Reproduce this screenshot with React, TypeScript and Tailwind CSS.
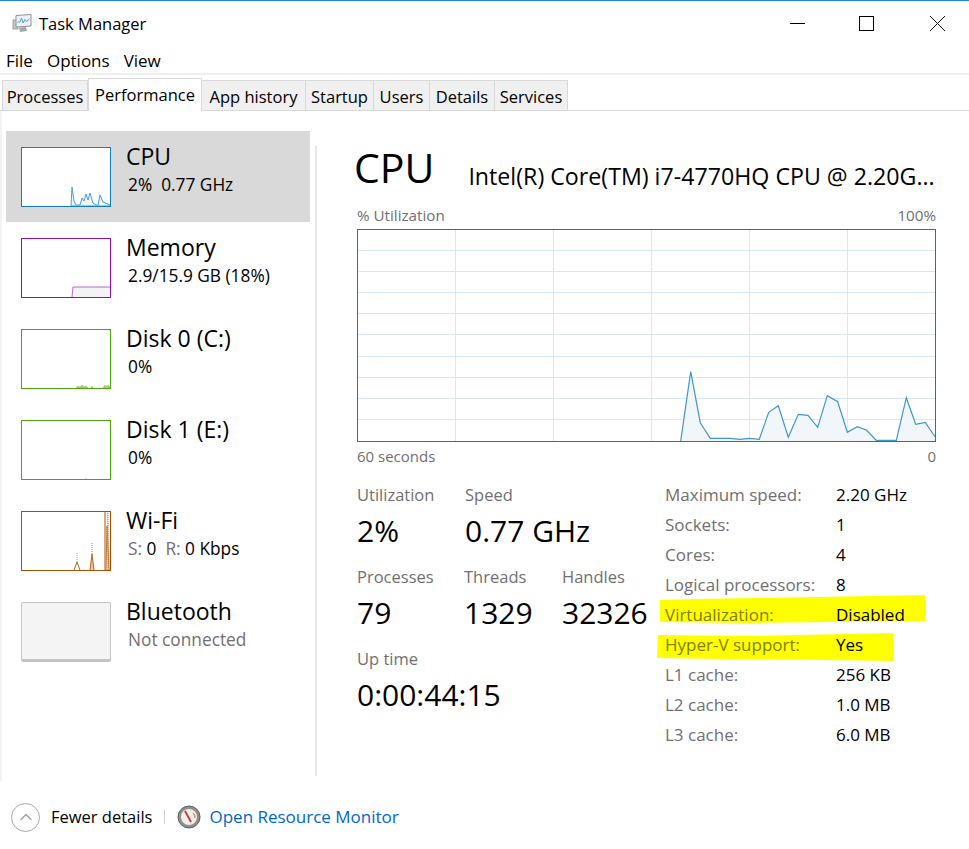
import { ChevronUp } from "lucide-react";

const tabs = [
  { label: "Processes", width: "w-[86px]" },
  { label: "Performance", width: "w-[114px]", active: true },
  { label: "App history", width: "w-[104px]" },
  { label: "Startup", width: "w-[68px]" },
  { label: "Users", width: "w-[56px]" },
  { label: "Details", width: "w-[65px]" },
  { label: "Services", width: "w-[73px]" },
];

const cpuPoints =
  "323.7,212 333.7,142.7 343.3,193.7 353.3,209.3 373,209.3 383,210.3 392.3,209.3 402.3,210.3 411.7,183.3 421.3,176.7 431.3,208.3 441.3,185.3 451,186.3 460.7,198.3 470.3,166.7 480.7,172.7 490.3,203.3 500.3,197.7 509.7,201.3 519.3,211.3 539.3,211.3 549.3,168.7 558.7,195.3 568.3,193.3 578,207.7";

function CpuThumb() {
  return (
    <svg viewBox="0 0 88 58" className="h-full w-full">
      <path
        d="M49 58 L50 39 L52 53 L54 57 L58 57 L60 50 L62 53 L64 46 L66 52 L68 45 L71 55 L74 57 L76 57 L78 47 L81 54 L88 57 V58 Z"
        fill="#f1f6fb"
        stroke="#4b9fd0"
        strokeWidth="1"
      />
    </svg>
  );
}

function MemoryThumb() {
  return (
    <svg viewBox="0 0 88 58" className="h-full w-full">
      <path d="M50 58 L51 48 H88 V58 Z" fill="#f4f2f4" />
      <path d="M50 58 L51 48 H88" fill="none" stroke="#b36cc9" strokeWidth="1" />
    </svg>
  );
}

function DiskThumb({ busy }: { busy: boolean }) {
  return (
    <svg viewBox="0 0 88 58" className="h-full w-full">
      {busy ? (
        <path
          d="M54 58 L56 56 L58 57 L60 55 L62 57 L64 56 L66 58 Z M69 58 L70 56 L71 58 Z M81 58 L83 55 L85 57 L86 55 L88 57 V58 Z"
          fill="#a8cf86"
          stroke="#8fc365"
          strokeWidth="0.6"
        />
      ) : (
        <path d="M63 58 L64 57 L65 58 Z" fill="#a8cf86" />
      )}
    </svg>
  );
}

function WifiThumb() {
  return (
    <svg viewBox="0 0 88 58" className="h-full w-full">
      <path d="M52 58 L55 50 L58 58" fill="none" stroke="#b5651d" strokeWidth="1" />
      <path d="M55 50 V40" stroke="#dd9a78" strokeWidth="1" strokeDasharray="1 1" />
      <path d="M68 58 L70 42 L72 58" fill="#e7c6ab" stroke="#b5651d" strokeWidth="1" />
      <path d="M70 42 V31" stroke="#d9713f" strokeWidth="1" strokeDasharray="1 1" />
      <path d="M83 58 V0" stroke="#a85404" strokeWidth="1" />
      <path d="M84 58 L85 0 L86 0 L88 58 Z" fill="#edd8c4" />
      <path d="M86 58 V0" stroke="#d9713f" strokeWidth="1" strokeDasharray="1 1" />
      <path d="M84 58 L85 14 L87 58" fill="none" stroke="#c47a3c" strokeWidth="1" />
    </svg>
  );
}

const sideItems = [
  {
    title: "CPU",
    box: "border-[#117dbb]",
    thumb: <CpuThumb />,
    sub: <span>2%&nbsp; 0.77 GHz</span>,
    selected: true,
  },
  {
    title: "Memory",
    box: "border-[#8b12ae]",
    thumb: <MemoryThumb />,
    sub: <span>2.9/15.9 GB (18%)</span>,
  },
  {
    title: "Disk 0 (C:)",
    box: "border-[#4da60c]",
    thumb: <DiskThumb busy />,
    sub: <span>0%</span>,
  },
  {
    title: "Disk 1 (E:)",
    box: "border-[#4da60c]",
    thumb: <DiskThumb busy={false} />,
    sub: <span>0%</span>,
  },
  {
    title: "Wi-Fi",
    box: "border-[#a74f01]",
    thumb: <WifiThumb />,
    sub: (
      <span>
        <span className="text-[#707070]">S:</span> 0&nbsp; <span className="text-[#707070]">R:</span> 0 Kbps
      </span>
    ),
  },
  {
    title: "Bluetooth",
    box: "border-[#c4c4c4] bg-[#f4f4f4] rounded-[2px] border-b-[3px]",
    thumb: null,
    sub: <span className="text-[#707070]">Not connected</span>,
  },
];

const specs = [
  ["Maximum speed:", "2.20 GHz"],
  ["Sockets:", "1"],
  ["Cores:", "4"],
  ["Logical processors:", "8"],
  ["Virtualization:", "Disabled"],
  ["Hyper-V support:", "Yes"],
  ["L1 cache:", "256 KB"],
  ["L2 cache:", "1.0 MB"],
  ["L3 cache:", "6.0 MB"],
];

function TaskIcon() {
  return (
    <svg viewBox="0 0 20 20" className="h-5 w-5">
      <rect x="1" y="7" width="5" height="9" fill="#c8c8c8" stroke="#8a8a8a" strokeWidth="0.7" />
      <path d="M4 2.5 L19 1.5 V13 L4 14 Z" fill="#eef2f6" stroke="#8c9298" strokeWidth="1" />
      <path d="M5.5 9 L8 9 L9.5 5 L11 10 L13 6.5 L14.5 8.5 L17.5 6" fill="none" stroke="#4d9fd6" strokeWidth="1" />
      <path d="M7 14.5 L14 14 L15 18 L8 19 Z" fill="#a8a8a8" />
    </svg>
  );
}

function GaugeIcon() {
  return (
    <svg viewBox="0 0 24 24" className="h-6 w-6">
      <circle cx="12" cy="12" r="11" fill="#8f8f8b" />
      <circle cx="12" cy="12" r="11" fill="none" stroke="#5f5f5c" strokeWidth="1" />
      <circle cx="12" cy="12" r="8" fill="#eeeeea" />
      <path d="M8 6 L14 17" stroke="#d2342c" strokeWidth="1.8" />
      <path d="M16 8 A6 6 0 0 1 18 13" fill="none" stroke="#d89a5a" strokeWidth="1.5" />
    </svg>
  );
}

function UtilChart() {
  return (
    <div className="h-[213px] w-[579px] border border-[#1b78ad]">
      <svg viewBox="0 0 577 211" className="block h-full w-full">
        {[21, 42, 63, 84, 105, 127, 148, 169, 190].map((y) => (
          <line key={y} x1="0" x2="577" y1={y - 0.5} y2={y - 0.5} stroke="#d9e8f3" strokeWidth="1" />
        ))}
        {[97, 195, 293, 391, 489].map((x) => (
          <line key={x} x1={x + 0.5} x2={x + 0.5} y1="0" y2="211" stroke="#d9e8f3" strokeWidth="1" />
        ))}
        <polygon points={`${cpuPoints} 578,212 323,212`} fill="#f1f6fb" transform="translate(-1,-1)" />
        <polyline points={cpuPoints} fill="none" stroke="#3f97c9" strokeWidth="1.2" transform="translate(-1,-1)" />
      </svg>
    </div>
  );
}

function Stat({ label, value, className }: { label: string; value: string; className: string }) {
  return (
    <div className={className}>
      <div className="h-[24px] text-[16.5px] leading-[24px] text-[#707070]">{label}</div>
      <div className="mt-[3px] h-[42px] text-[30px] leading-[42px] text-black">{value}</div>
    </div>
  );
}

export default function App() {
  return (
    <div className="flex h-[849px] w-[969px] flex-col overflow-hidden bg-white font-['Open_Sans',sans-serif] text-black">
      <div className="h-px bg-[#1a86d8]" />

      <div className="flex h-[45px] items-center">
        <div className="ml-[12px] mt-[-1px]">
          <TaskIcon />
        </div>
        <span className="ml-[7px] pt-[1px] text-[16.5px]">Task Manager</span>
        <div className="ml-auto mt-[-1px] flex items-center">
          <div className="h-px w-[15px] bg-black" />
          <div className="ml-[54px] h-[15px] w-[15px] border border-black" />
          <svg viewBox="0 0 15 15" className="ml-[56px] mr-[24px] h-[15px] w-[15px]">
            <path d="M0 0 L15 15 M15 0 L0 15" stroke="#111" strokeWidth="1" />
          </svg>
        </div>
      </div>

      <div className="flex h-[27px] items-center gap-[14px] pl-[6px] pt-[2px] text-[17px]">
        <span>File</span>
        <span>Options</span>
        <span>View</span>
      </div>

      <div className="flex h-[38px] items-end border-b border-[#d9d9d9] pl-[2px] shadow-[inset_0_2px_0_#f0f0f0]">
        {tabs.map((tab) =>
          tab.active ? (
            <div
              key={tab.label}
              className={`${tab.width} relative -mb-px flex h-[33px] items-start justify-center border border-b-0 border-[#d9d9d9] bg-white pt-[5px] text-[16.5px] leading-[22px]`}
            >
              {tab.label}
            </div>
          ) : (
            <div
              key={tab.label}
              className={`${tab.width} flex h-[30px] items-center justify-center border-t border-r border-[#d9d9d9] bg-[#f0f0f0] pt-[4px] text-[16.5px] first:border-l`}
            >
              {tab.label}
            </div>
          ),
        )}
      </div>

      <div className="flex h-[670px]">
        <aside className="h-full w-[317px] border-l-2 border-[#f3f3f3] pl-[4px] pt-[20px]">
          <div className="flex h-[644px]">
            <div className="w-[305px]">
              {sideItems.map((item) => (
                <div
                  key={item.title}
                  className={`flex h-[91px] pl-[15px] pt-[16px] ${item.selected ? "bg-[#d9d9d9]" : ""}`}
                >
                  <div className={`h-[60px] w-[90px] border ${item.selected ? "bg-white" : ""} ${item.box}`}>
                    {item.thumb}
                  </div>
                  <div className="ml-[15px] mt-[-6px]">
                    <div className="text-[23px] leading-[30px]">{item.title}</div>
                    <div className="ml-[2px] mt-[1px] text-[17.3px] leading-[26px]">{item.sub}</div>
                  </div>
                </div>
              ))}
            </div>
            <div className="ml-[5px] mt-[15px] h-[630px] w-[2px] bg-[#e6e6e6]" />
          </div>
        </aside>

        <main className="w-[652px] pl-[39px] pt-[26px]">
          <div className="flex h-[60px] w-[582px] items-center">
            <span className="ml-[-2px] text-[41px] leading-[60px]">CPU</span>
            <span className="ml-[34px] mt-[18px] whitespace-nowrap text-[23.2px]">
              Intel(R) Core(TM) i7-4770HQ CPU @ 2.20G...
            </span>
          </div>

          <div className="mt-[6px] flex h-[24px] w-[580px] items-center justify-between pl-[1px] text-[15.2px] text-[#707070]">
            <span>% Utilization</span>
            <span>100%</span>
          </div>
          <div className="ml-px mt-[2px]">
            <UtilChart />
          </div>
          <div className="flex h-[28px] w-[580px] items-center justify-between pl-[1px] text-[15px] text-[#707070]">
            <span>60 seconds</span>
            <span>0</span>
          </div>

          <div className="mt-[13px] flex w-[581px] pl-[1px]">
            <div className="w-[308px]">
              <div className="grid grid-cols-[108px_99px_100px]">
                <Stat label="Utilization" value="2%" className="" />
                <Stat label="Speed" value="0.77 GHz" className="col-span-2" />
              </div>
              <div className="mt-[13px] grid grid-cols-[107px_98px_103px]">
                <Stat label="Processes" value="79" className="" />
                <Stat label="Threads" value="1329" className="" />
                <Stat label="Handles" value="32326" className="" />
              </div>
              <div className="mt-[13px]">
                <Stat label="Up time" value="0:00:44:15" className="" />
              </div>
            </div>
            <div className="mt-[-3px] w-[272px]">
              {specs.map(([label, value]) => {
                const marked = label === "Virtualization:" || label === "Hyper-V support:";
                return (
                  <div key={label} className="relative flex h-[30px] items-center text-[17px]">
                    {label === "Virtualization:" && (
                      <svg viewBox="0 0 266 28" className="absolute left-[-6px] top-[-5px] h-[28px] w-[266px]">
                        <path d="M1 5 L40 4 L266 0 V26 L90 28 L1 27 Z" fill="#ffff00" />
                      </svg>
                    )}
                    {label === "Hyper-V support:" && (
                      <svg viewBox="0 0 238 29" className="absolute left-[-8px] top-[3px] h-[29px] w-[238px]">
                        <path d="M1 2 L90 3 L236 0 L237 28 L170 27 L70 26 L0 25 Z" fill="#ffff00" />
                      </svg>
                    )}
                    <span className={`relative w-[171px] ${marked ? "text-[#808000]" : "text-[#707070]"}`}>{label}</span>
                    <span className="relative">{value}</span>
                  </div>
                );
              })}
            </div>
          </div>
        </main>
      </div>

      <div className="flex h-[68px] items-center pl-[11px] pt-[4px]">
        <div className="flex h-[29px] w-[29px] items-center justify-center rounded-full border border-[#a8a8a8]">
          <ChevronUp className="h-[20px] w-[20px] text-[#9a9a9a]" strokeWidth={1.5} />
        </div>
        <span className="ml-[11px] text-[16.5px]">Fewer details</span>
        <div className="ml-[12px] h-[14px] w-px bg-[#d0d0d0]" />
        <div className="ml-[12px]">
          <GaugeIcon />
        </div>
        <span className="ml-[8px] text-[17px] text-[#0066cc]">Open Resource Monitor</span>
      </div>
    </div>
  );
}
